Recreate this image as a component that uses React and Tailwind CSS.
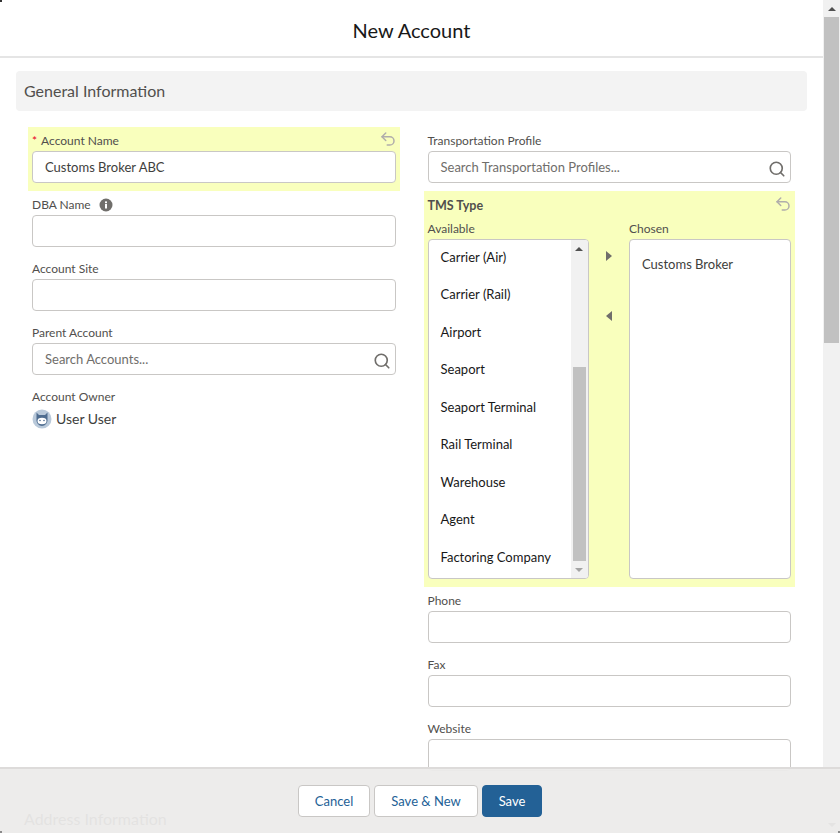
import { Search, Undo2 } from "lucide-react";

const availableItems = [
  "Carrier (Air)",
  "Carrier (Rail)",
  "Airport",
  "Seaport",
  "Seaport Terminal",
  "Rail Terminal",
  "Warehouse",
  "Agent",
  "Factoring Company",
];

function Label({ children }) {
  return <div className="text-xs leading-[20px] h-5 text-[#514f4d]">{children}</div>;
}

function TextInput({ value, placeholder, search }) {
  return (
    <div className="h-8 border border-[#c9c7c5] rounded bg-white flex items-center pl-3 pr-1 text-[13px]">
      <span className={`flex-1 pt-[1px] ${value ? "text-[#3e3e3c]" : "text-[#706e6b]"}`}>{value || placeholder}</span>
      {search && <Search className="w-[18px] h-[18px] mt-[4px] text-[#706e6b]" strokeWidth={2.2} />}
    </div>
  );
}

function Field({ label, value, placeholder, search, info }) {
  return (
    <div className="h-16 px-1 pt-1">
      <div className="flex items-center gap-[8px]">
        <Label>{label}</Label>
        {info && <InfoIcon />}
      </div>
      <TextInput value={value} placeholder={placeholder} search={search} />
    </div>
  );
}

function InfoIcon() {
  return (
    <svg width="14" height="14" viewBox="0 0 14 14">
      <circle cx="7" cy="7" r="6.5" fill="#706e6b" />
      <rect x="6" y="6" width="2" height="4.5" fill="#fff" />
      <rect x="6" y="3.4" width="2" height="1.8" fill="#fff" />
    </svg>
  );
}

function Avatar() {
  return (
    <svg width="20" height="20" viewBox="0 0 20 20" className="shrink-0 mt-[2px]">
      <circle cx="10" cy="10" r="9.5" fill="#b9c9da" />
      <path d="M4.5 3.5 L7 6 H13 L15.5 3.5 L15.5 10 C16 14 13 17 10 17 C7 17 4 14 4.5 10 Z" fill="#4f6d90" />
      <ellipse cx="10" cy="12" rx="4.5" ry="3.2" fill="#fff" />
      <circle cx="8" cy="11.5" r="0.8" fill="#4f6d90" />
      <circle cx="12" cy="11.5" r="0.8" fill="#4f6d90" />
    </svg>
  );
}

function DualList() {
  return (
    <div className="flex h-[340px]">
      <div className="w-[161px] border border-[#c9c7c5] rounded bg-white flex overflow-hidden">
        <div className="flex-1 overflow-hidden">
          <div className="-mt-[1.5px]">
            {availableItems.map((item) => (
              <div key={item} className="h-[37.5px] pl-3 flex items-center text-[13px] text-[#181818]">
                {item}
              </div>
            ))}
          </div>
        </div>
        <div className="w-[17px] bg-[#f1f1f1] flex flex-col items-center">
          <div className="h-[17px] flex items-center justify-center">
            <div className="w-0 h-0 border-x-[4px] border-x-transparent border-b-[4px] border-b-[#505050]" />
          </div>
          <div className="flex-1 w-full flex flex-col justify-end px-[2px]">
            <div className="h-[194px] bg-[#c1c1c1]" />
          </div>
          <div className="h-[17px] flex items-center justify-center">
            <div className="w-0 h-0 border-x-[4px] border-x-transparent border-t-[4px] border-t-[#a3a3a3]" />
          </div>
        </div>
      </div>
      <div className="w-[40px] flex flex-col items-center pt-[12px] gap-[50px]">
        <div className="w-0 h-0 border-y-[5px] border-y-transparent border-l-[6px] border-l-[#706e6b]" />
        <div className="w-0 h-0 border-y-[5px] border-y-transparent border-r-[6px] border-r-[#706e6b]" />
      </div>
      <div className="w-[162px] border border-[#c9c7c5] rounded bg-white pl-[12.5px] pt-[15px] text-[13px] leading-[18px] text-[#3e3e3c]">
        Customs Broker
      </div>
    </div>
  );
}

export default function App() {
  return (
    <div
      className="relative h-[833px] w-full overflow-hidden flex bg-white"
      style={{ fontFamily: 'Lato, sans-serif' }}
    >
      <div className="w-[823px] h-full overflow-hidden">
        <div className="h-[58px] border-b-2 border-[#e5e5e5] flex items-center justify-center text-xl text-[#181818] pt-[3px]">
          New Account
        </div>
        <div className="px-4 pt-[13px]">
          <div className="h-10 bg-[#f3f3f3] rounded flex items-center px-2 text-base text-[#514f4d]">
            General Information
          </div>
          <div className="grid grid-cols-2 gap-x-6 px-3 pt-4">
            {/* Left column */}
            <div>
              <div className="h-16 px-1 pt-1 bg-[#f9ffbd]">
                <div className="flex items-start justify-between">
                  <Label>
                    <span className="text-[#ea001e] mr-[4px]">*</span>Account Name
                  </Label>
                  <Undo2 className="w-[18px] h-[18px] -mt-[1px] -mr-[1px] text-[#b0adab]" />
                </div>
                <TextInput value="Customs Broker ABC" />
              </div>
              <Field label="DBA Name" info />
              <Field label="Account Site" />
              <Field label="Parent Account" placeholder="Search Accounts..." search />
              <div className="px-1 pt-1">
                <Label>Account Owner</Label>
                <div className="flex items-start gap-1 text-sm leading-[24px] text-[#3e3e3c]">
                  <Avatar />
                  User User
                </div>
              </div>
            </div>
            {/* Right column */}
            <div>
              <Field label="Transportation Profile" placeholder="Search Transportation Profiles..." search />
              <div className="h-[396px] bg-[#f9ffbd] px-1 pt-[4px]">
                <div className="flex items-start justify-between h-5 mb-[4px]">
                  <span className="text-[12.5px] leading-[21px] font-bold text-[#514f4d]">TMS Type</span>
                  <Undo2 className="w-[18px] h-[18px] -mr-[1px] text-[#b0adab]" />
                </div>
                <div className="flex h-5 text-xs leading-[20px] text-[#514f4d]">
                  <span className="w-[201.5px]">Available</span>
                  <span>Chosen</span>
                </div>
                <DualList />
              </div>
              <Field label="Phone" />
              <Field label="Fax" />
              <Field label="Website" />
            </div>
          </div>
          <div className="h-10 bg-[#f3f3f3] rounded flex items-center px-2 text-base text-[#3e3e3c] mt-[20px]">
            Address Information
          </div>
        </div>
      </div>

      {/* Page scrollbar */}
      <div className="w-[17px] h-full bg-[#f1f1f1] flex flex-col items-center">
        <div className="h-[17px] flex items-center justify-center">
          <div className="w-0 h-0 border-x-[4px] border-x-transparent border-b-[4px] border-b-[#505050]" />
        </div>
        <div className="h-[326px] w-[15px] bg-[#c1c1c1]" />
        <div className="flex-1" />
        <div className="h-[17px] flex items-center justify-center">
          <div className="w-0 h-0 border-x-[4px] border-x-transparent border-t-[4px] border-t-[#505050]" />
        </div>
      </div>

      {/* Footer over the form */}
      <div className="absolute left-0 right-0 bottom-0 h-[66px] bg-[#ecebea]/95 border-t-2 border-[#dddbda] flex items-center justify-center gap-1 text-[13px]">
        <button className="w-[72px] h-8 pt-[1px] bg-white border border-[#c9c7c5] rounded text-[#236196]">Cancel</button>
        <button className="w-[104px] h-8 pt-[1px] bg-white border border-[#c9c7c5] rounded text-[#236196]">Save &amp; New</button>
        <button className="w-[60px] h-8 pt-[1px] bg-[#236196] border border-[#236196] rounded text-white">Save</button>
      </div>

      {/* Window corner specks */}
      <div className="absolute top-0 left-0 w-[2px] h-[2px] bg-[#333333]" />
      <div className="absolute bottom-0 left-0 w-[2px] h-[2px] bg-[#8a8a8a]" />
      <div className="absolute bottom-0 right-0 w-[2px] h-[2px] bg-[#8a8a8a]" />
    </div>
  );
}
